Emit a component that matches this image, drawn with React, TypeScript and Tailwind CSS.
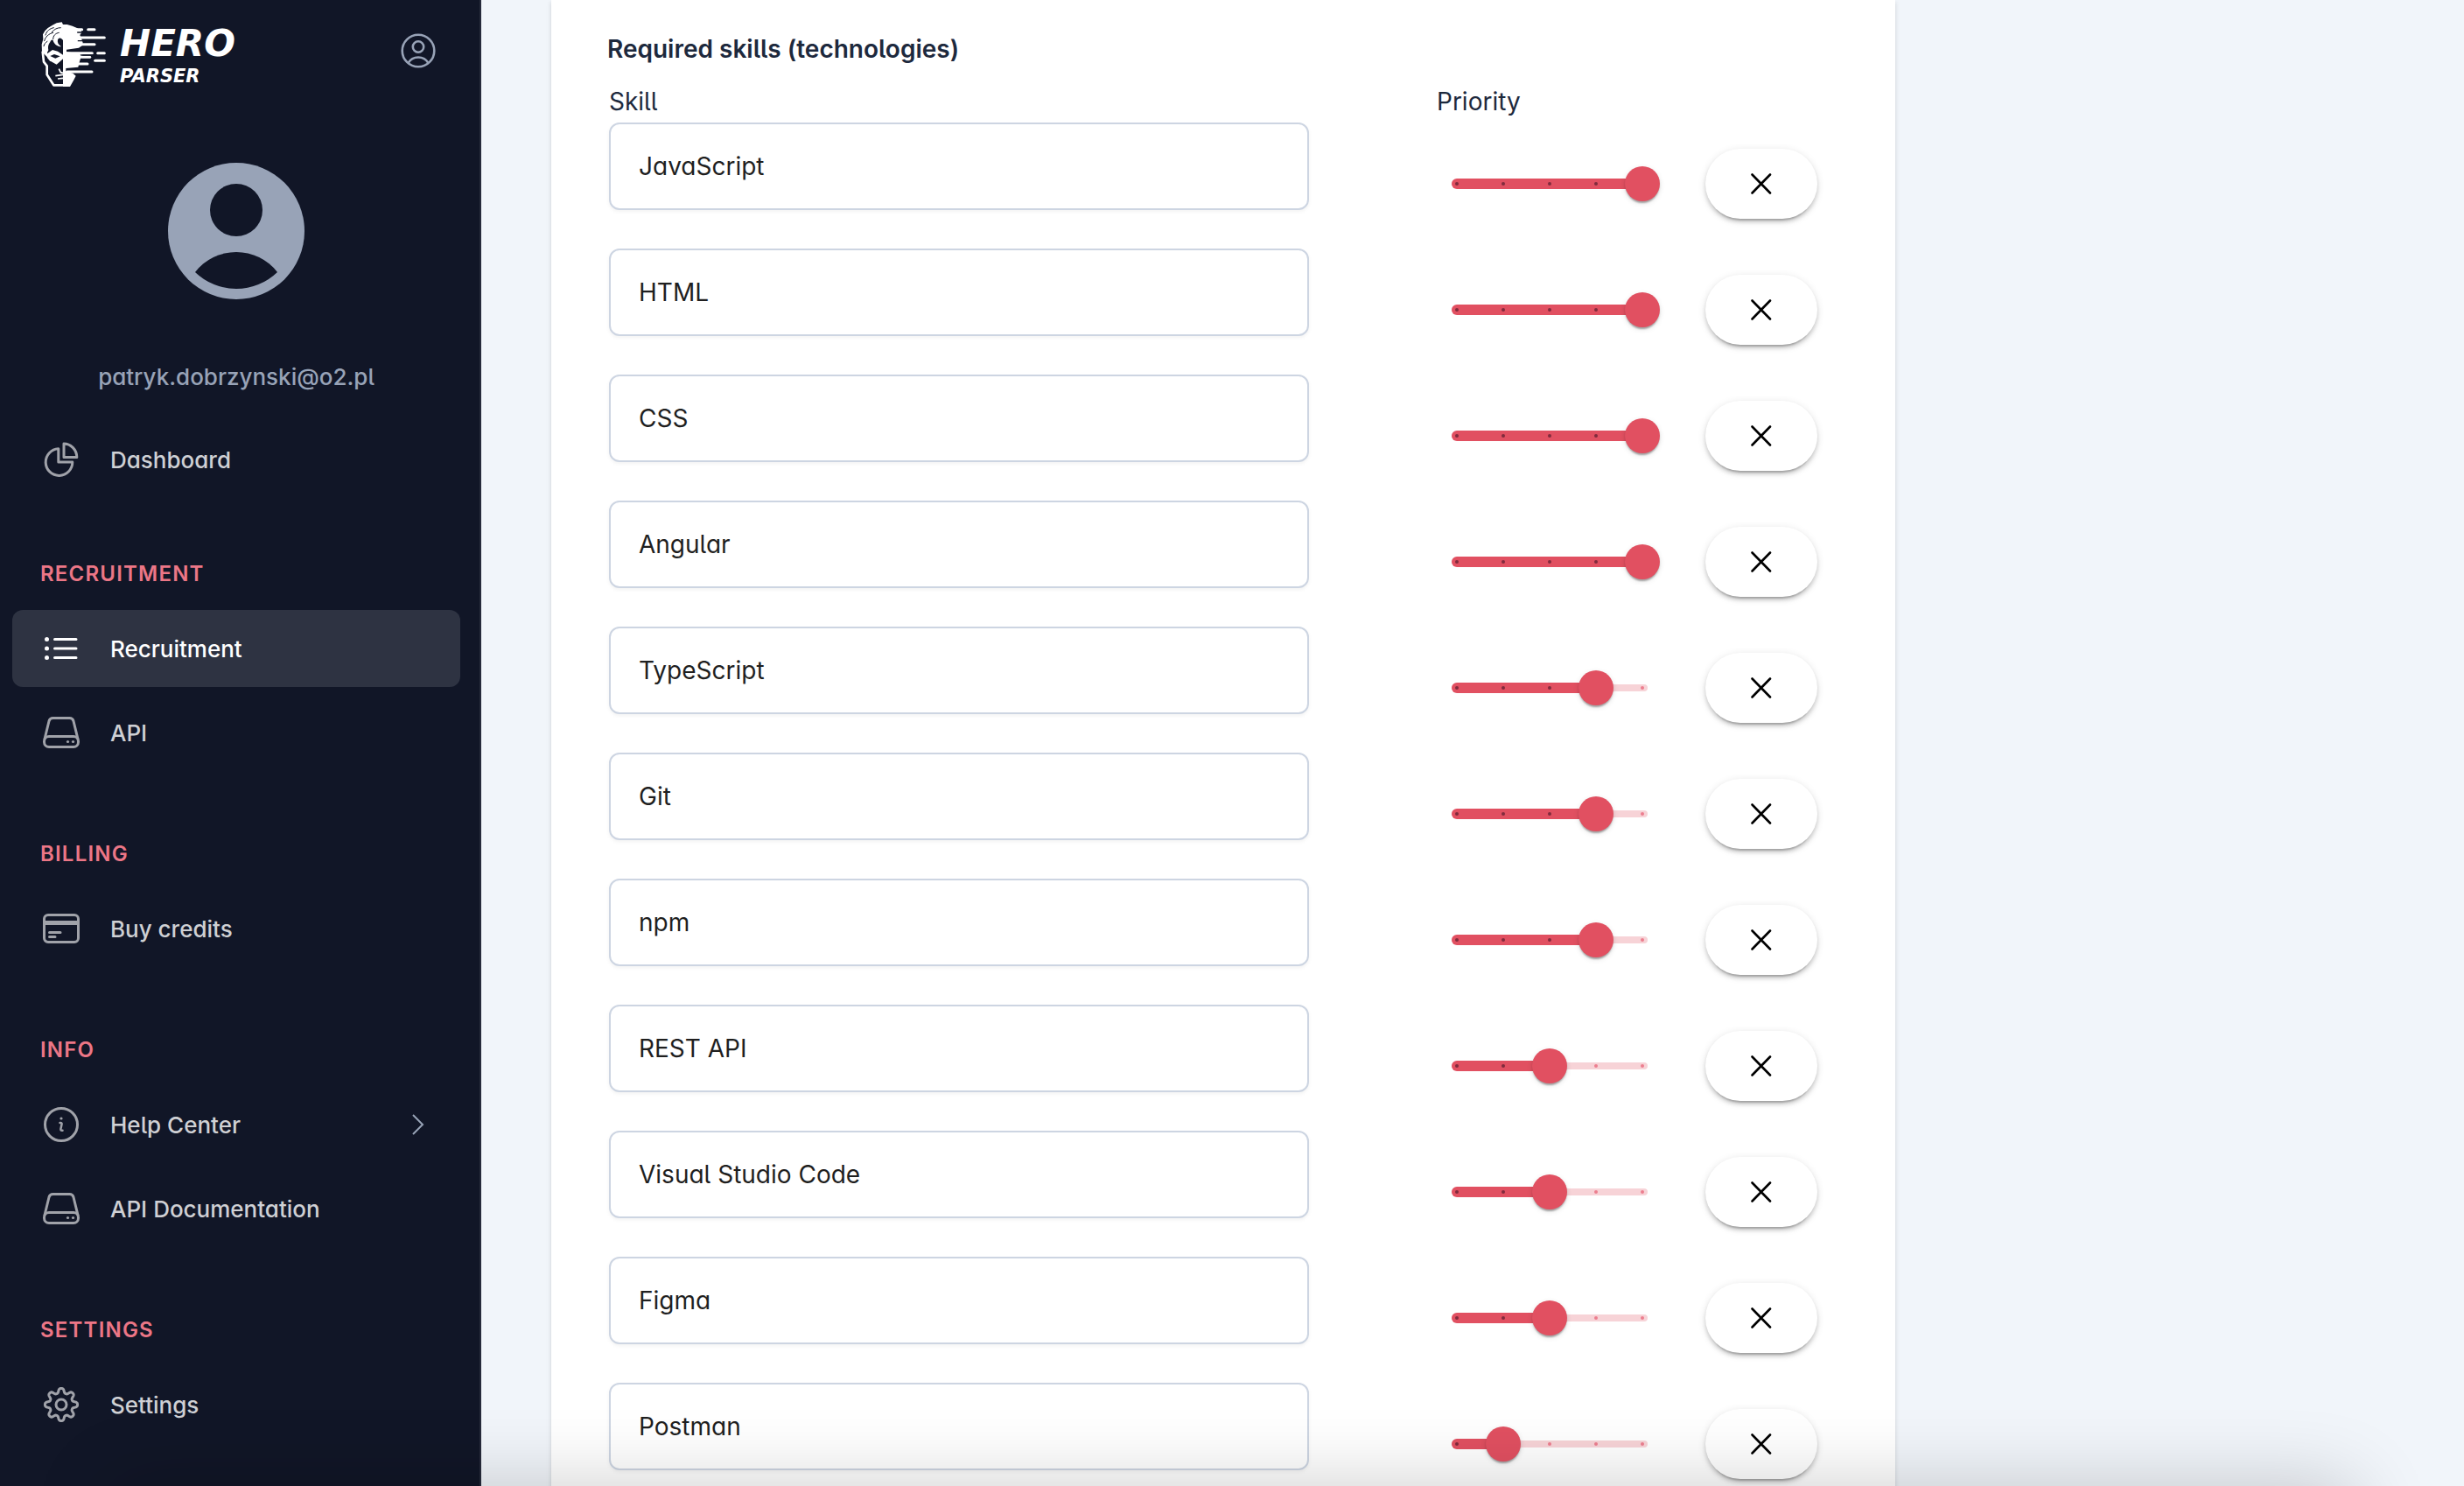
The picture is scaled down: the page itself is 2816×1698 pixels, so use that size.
import { useState } from "react";

type NavEntry = {
  label: string;
  icon: React.ReactNode;
  active?: boolean;
  expandable?: boolean;
};

type NavSection = {
  title: string;
  items: NavEntry[];
};

type Skill = {
  name: string;
  priority: number;
};

const INITIAL_SKILLS: Skill[] = [
  { name: "JavaScript", priority: 5 },
  { name: "HTML", priority: 5 },
  { name: "CSS", priority: 5 },
  { name: "Angular", priority: 5 },
  { name: "TypeScript", priority: 4 },
  { name: "Git", priority: 4 },
  { name: "npm", priority: 4 },
  { name: "REST API", priority: 3 },
  { name: "Visual Studio Code", priority: 3 },
  { name: "Figma", priority: 3 },
  { name: "Postman", priority: 2 },
];

const STEPS = [1, 2, 3, 4, 5];

// Eight rounded teeth around (24, 24)
const GEAR_PATH =
  Array.from({ length: 160 }, (_, i) => {
    const a = (i / 160) * Math.PI * 2;
    const r = 16 + 2.6 * (Math.tanh(1.5 * Math.cos(8 * a)) / Math.tanh(1.5));
    return `${i === 0 ? "M" : "L"}${(24 + r * Math.sin(a)).toFixed(2)} ${(24 - r * Math.cos(a)).toFixed(2)}`;
  }).join("") + "Z";

function NavIcon({ children }: { children: React.ReactNode }) {
  return (
    <svg
      viewBox="0 0 48 48"
      fill="none"
      stroke="currentColor"
      strokeWidth="3"
      strokeLinecap="round"
      strokeLinejoin="round"
      className="size-12 shrink-0"
      aria-hidden="true"
    >
      {children}
    </svg>
  );
}

const PieIcon = (
  <NavIcon>
    <path d="M20.8 11.8A15.3 15.3 0 1 0 36.8 27H20.8Z" />
    <path d="M27 6v15.6h14.8A15 15.6 0 0 0 27 6Z" />
  </NavIcon>
);

const ListIcon = (
  <NavIcon>
    <path d="M16.5 13.5H41M16.5 24H41M16.5 34.5H41" />
    <g fill="currentColor" stroke="none">
      <circle cx="7.5" cy="13.5" r="2.5" />
      <circle cx="7.5" cy="24" r="2.5" />
      <circle cx="7.5" cy="34.5" r="2.5" />
    </g>
  </NavIcon>
);

const DriveIcon = (
  <NavIcon>
    <rect x="4.5" y="28.5" width="39" height="12" rx="5.5" />
    <path d="M5 31.5 10 11c.6-2.2 2.3-3.5 4.5-3.5h19c2.2 0 3.9 1.3 4.5 3.5l5 20.5" />
    <g fill="currentColor" stroke="none">
      <circle cx="31.5" cy="34.5" r="1.6" />
      <circle cx="37.5" cy="34.5" r="1.6" />
    </g>
  </NavIcon>
);

const CardIcon = (
  <NavIcon>
    <rect x="4.5" y="8.5" width="39" height="31" rx="4.5" />
    <path d="M4.5 17.4h39" strokeWidth="5" strokeLinecap="butt" />
    <path d="M10.5 28.5h12.5M10.5 33.5H17" />
  </NavIcon>
);

const InfoIcon = (
  <NavIcon>
    <circle cx="24" cy="24" r="18.5" />
    <path d="M22.5 22h.8c1 0 1.5.7 1.3 1.6l-1.2 5.4c-.2 1 .3 1.7 1.3 1.7h.8" strokeWidth="2.5" />
    <circle cx="24" cy="17" r="1.6" fill="currentColor" stroke="none" />
  </NavIcon>
);

const GearIcon = (
  <NavIcon>
    <path d={GEAR_PATH} />
    <circle cx="24" cy="24" r="6" />
  </NavIcon>
);

const SECTIONS: NavSection[] = [
  {
    title: "RECRUITMENT",
    items: [
      { label: "Recruitment", icon: ListIcon, active: true },
      { label: "API", icon: DriveIcon },
    ],
  },
  { title: "BILLING", items: [{ label: "Buy credits", icon: CardIcon }] },
  {
    title: "INFO",
    items: [
      { label: "Help Center", icon: InfoIcon, expandable: true },
      { label: "API Documentation", icon: DriveIcon },
    ],
  },
  { title: "SETTINGS", items: [{ label: "Settings", icon: GearIcon }] },
];

function HeroMark() {
  return (
    <svg viewBox="20 21 225 225" className="size-[75px] shrink-0" aria-hidden="true">
      {/* solid half of the face */}
      <path
        fill="#fff"
        d="M98 30 112 30 130 35 146 42 160 50 162 58 156 66 162 80 166 92 164 102 152 110 110 116V124L156 130 160 140 154 160 150 176 108 180V190L132 197 142 206 134 222 122 243H98Z"
      />
      {/* hair */}
      <path
        fill="#fff"
        d="M26 124 25 98 30 80 29 64 36 52 46 42 62 32 76 25 94 22 98 30 112 30 112 56 98 58 98 84C92 74 84 74 80 82 78 92 82 100 92 106 78 106 66 96 64 84 60 80 56 84 54 90 48 98 46 104 48 118L44 126 46 144 38 136Z"
      />
      <g fill="none" stroke="#111627" strokeWidth="3" strokeLinecap="round">
        <path d="M38 66c4-14 14-22 28-25" />
        <path d="M34 86c4-14 14-24 30-28" />
        <path d="M60 56c8-10 18-15 30-15" />
        <path d="M64 80c0-12 8-20 20-22" />
        <path d="M32 104c2-8 6-12 12-16" />
      </g>
      {/* ear and jaw line */}
      <path
        d="M28 122 32 158 43 172V202L66 238H100"
        fill="none"
        stroke="#fff"
        strokeWidth="8"
        strokeLinejoin="round"
      />
      {/* mask with the left eye */}
      <path fill="#fff" d="M44 130 62 117 80 122 98 134V148L76 167 52 154 44 144Z" />
      <path fill="#111627" d="M54 138 68 132 88 139 72 146Z" />
      <path d="M72 206 98 202M80 216 98 214M84 182 90 194 98 196" fill="none" stroke="#fff" strokeWidth="5" />
      {/* speed lines */}
      <g stroke="#fff" strokeWidth="9" strokeLinecap="round">
        <path d="M130 47H163M184 47H206" />
        <path d="M130 75H240" />
        <path d="M130 98H206" />
        <path d="M112 128H198M217 128H240" />
        <path d="M112 142H190" />
        <path d="M208 154H240" />
        <path d="M112 165H182" />
        <path d="M112 192H197" />
      </g>
      <g stroke="#111627" strokeWidth="4" strokeLinecap="round">
        <path d="M148 57H176M150 86H180M112 120H190M166 135H200M160 153H190M156 174H180M112 184H170" />
      </g>
    </svg>
  );
}

function NavItem({ label, icon, active, expandable }: NavEntry) {
  return (
    <a
      href="#"
      className={`flex h-[88px] items-center gap-8 rounded-xl px-8 text-[26px] font-medium ${
        active ? "bg-[#2e3342] text-white" : "text-[#cfd0d4]"
      }`}
    >
      <span className={active ? "text-white" : "text-[#a0a2a9]"}>{icon}</span>
      <span className="flex-1">{label}</span>
      {expandable && (
        <svg viewBox="0 0 32 32" className="size-8 text-[#98a3b7]" fill="none" stroke="currentColor" strokeWidth="2" aria-hidden="true">
          <path d="M10 5l11 11-11 11" />
        </svg>
      )}
    </a>
  );
}

function Sidebar() {
  return (
    <aside className="flex w-[550px] shrink-0 flex-col border-r-2 border-[#272b3b] bg-[#111627] pr-[22px] pl-[14px]">
      <div className="flex h-[124px] items-center pr-7 pl-8">
        <HeroMark />
        <div className="ml-4 flex-1 pt-2 font-['DejaVu_Sans'] font-bold text-white italic">
          <div className="text-[42px] leading-[42px]">HERO</div>
          <div className="text-[21px] leading-8">PARSER</div>
        </div>
        <button type="button" aria-label="Account" className="mb-2 text-[#98a3b7]">
          <svg viewBox="0 0 40 40" className="size-10" fill="none" stroke="currentColor" strokeWidth="2.6" aria-hidden="true">
            <circle cx="20" cy="20" r="18.3" />
            <circle cx="20" cy="15.5" r="6.2" />
            <path d="M8.5 34c2.5-4.2 6.5-6.5 11.5-6.5s9 2.3 11.5 6.5" />
          </svg>
        </button>
      </div>

      <div className="mt-[62px] flex flex-col items-center">
        <svg viewBox="0 0 156 156" className="size-[156px] text-[#98a3b7]" aria-hidden="true">
          <circle cx="78" cy="78" r="78" fill="currentColor" />
          <circle cx="78" cy="54" r="30" fill="#111627" />
          <path d="M31 125A59.5 59.5 0 0 1 125 125A67.6 67.6 0 0 1 31 125Z" fill="#111627" />
        </svg>
        <p className="mt-[69px] text-[26px] leading-10 font-medium text-[#98a3b7]">patryk.dobrzynski@o2.pl</p>
      </div>

      <nav className="mt-[30px]">
        <NavItem label="Dashboard" icon={PieIcon} />
        <div className="flex flex-col gap-2">
          {SECTIONS.map((section) => (
            <section key={section.title} className="pt-16">
              <h2 className="mb-[18px] pl-8 text-2xl leading-[46px] font-semibold tracking-wider text-[#ec7686]">
                {section.title}
              </h2>
              <div className="flex flex-col gap-2">
                {section.items.map((item) => (
                  <NavItem key={item.label} {...item} />
                ))}
              </div>
            </section>
          ))}
        </div>
      </nav>
    </aside>
  );
}

function PrioritySlider({
  label,
  value,
  onChange,
}: {
  label: string;
  value: number;
  onChange: (value: number) => void;
}) {
  return (
    <div className="relative flex h-12 w-[252px] shrink-0 items-center">
      <div className="absolute inset-x-[14px] h-2 rounded-full bg-[#f7d3d7]" />
      <div
        className="absolute left-[14px] h-3 rounded-full bg-[#e15061]"
        style={{ width: 6 + (value - 1) * 53 }}
      />
      <div className="absolute inset-x-[18px] flex justify-between">
        {STEPS.map((step) => (
          <span key={step} className={`size-1 rounded-full ${step < value ? "bg-[#812b3d]" : "bg-[#ec7f8f]"}`} />
        ))}
      </div>
      <input
        type="range"
        min={1}
        max={5}
        value={value}
        aria-label={label}
        onChange={(e) => onChange(Number(e.target.value))}
        className="relative h-12 w-full cursor-pointer appearance-none bg-transparent [&::-webkit-slider-thumb]:size-10 [&::-webkit-slider-thumb]:appearance-none [&::-webkit-slider-thumb]:rounded-full [&::-webkit-slider-thumb]:bg-[#e15061] [&::-webkit-slider-thumb]:shadow-[0_4px_2px_-2px_rgba(0,0,0,0.2),0_2px_2px_rgba(0,0,0,0.14),0_2px_6px_rgba(0,0,0,0.12)]"
      />
    </div>
  );
}

function SkillRow({
  skill,
  onChange,
  onRemove,
}: {
  skill: Skill;
  onChange: (skill: Skill) => void;
  onRemove: () => void;
}) {
  return (
    <div className="flex h-36 items-start">
      <input
        type="text"
        aria-labelledby="skill-label"
        value={skill.name}
        onChange={(e) => onChange({ ...skill, name: e.target.value })}
        className="h-[100px] min-w-0 flex-1 rounded-xl border-2 border-[#cdd5e2] bg-white px-8 text-[28px] text-[#1f1f1f] shadow-[0_2px_4px_rgba(0,0,0,0.05)] outline-none"
      />
      <div className="ml-[149px] flex h-[140px] shrink-0 items-center gap-[52px]">
        <PrioritySlider
          label={`Priority of ${skill.name}`}
          value={skill.priority}
          onChange={(priority) => onChange({ ...skill, priority })}
        />
        <button
          type="button"
          aria-label={`Remove ${skill.name}`}
          onClick={onRemove}
          className="flex h-20 w-32 items-center justify-center rounded-full bg-white text-black shadow-[0_6px_2px_-4px_rgba(0,0,0,0.2),0_4px_4px_rgba(0,0,0,0.14),0_2px_10px_rgba(0,0,0,0.12)]"
        >
          <svg viewBox="0 0 24 24" className="size-6" fill="none" stroke="currentColor" strokeWidth="2.6" strokeLinecap="round" aria-hidden="true">
            <path d="M1.500 1.500l20.500 21M22 1.500 1.500 22.500" />
          </svg>
        </button>
      </div>
    </div>
  );
}

export default function App() {
  const [skills, setSkills] = useState(INITIAL_SKILLS);

  return (
    <div className="flex h-screen overflow-hidden bg-[#f1f5fa] font-[Inter,sans-serif] [font-feature-settings:'cv05','cv11']">
      <Sidebar />

      <main className="min-w-0 flex-1 px-20">
        <form className="min-h-full w-full max-w-[1536px] bg-white px-16 pt-9 shadow-[0_2px_6px_rgba(0,0,0,0.1),0_2px_4px_rgba(0,0,0,0.06)]">
          <h1 className="text-[28px] leading-10 font-semibold text-slate-800">Required skills (technologies)</h1>
          <div className="pr-[25px] pl-0.5">
            <div className="mt-5 flex h-11 text-[28px] leading-10 text-slate-800">
              <span id="skill-label" className="flex-1">
                Skill
              </span>
              <span className="w-[435px] shrink-0">Priority</span>
            </div>
            {skills.map((skill, i) => (
              <SkillRow
                key={i}
                skill={skill}
                onChange={(next) => setSkills(skills.map((s, j) => (j === i ? next : s)))}
                onRemove={() => setSkills(skills.filter((_, j) => j !== i))}
              />
            ))}
          </div>
        </form>
      </main>

      {/* Shade that rises from below the fold */}
      <div className="pointer-events-none fixed inset-x-[126px] top-full h-48 shadow-[0_0_90px_rgba(0,0,0,0.2)]" />
    </div>
  );
}
